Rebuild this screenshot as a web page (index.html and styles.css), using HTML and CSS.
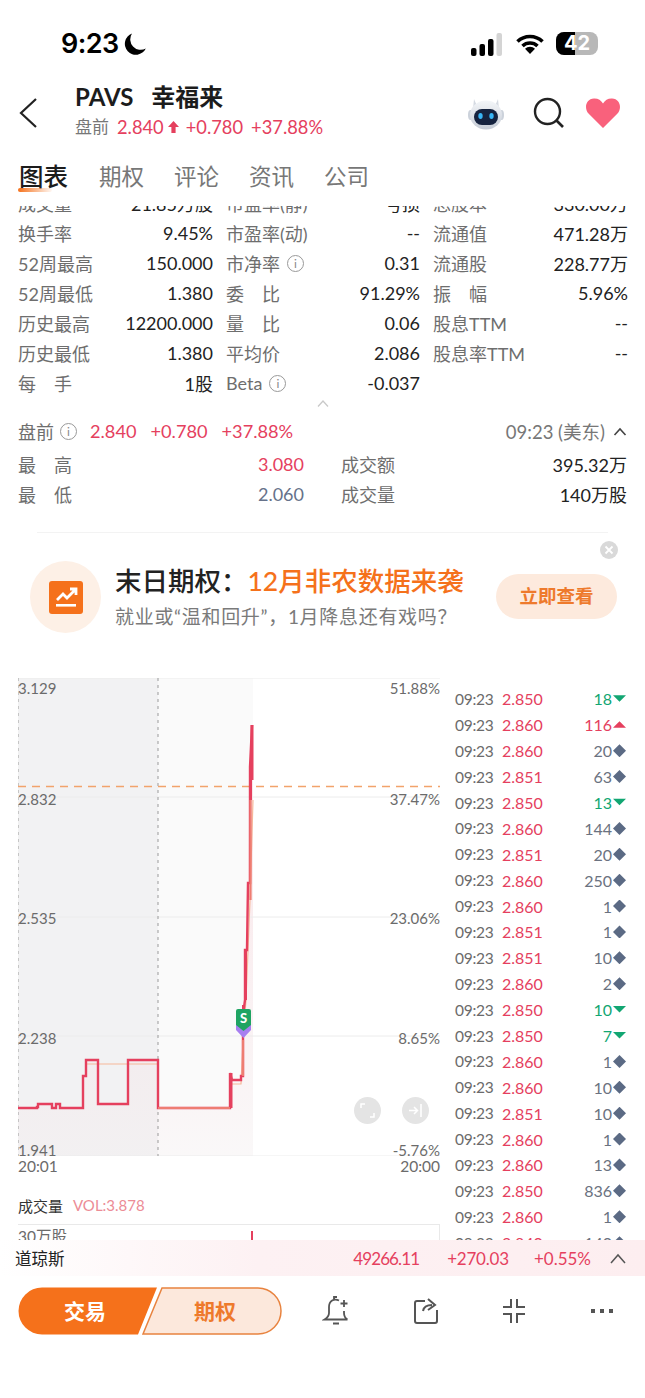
FILE: index.html
```html
<!DOCTYPE html>
<html lang="zh">
<head>
<meta charset="utf-8">
<title>PAVS 幸福来</title>
<link rel="stylesheet" href="styles.css">
</head>
<body>
<div class="page">
  <div class="status">
    <div class="status-left">
      <span class="clock">9:23</span>
      <svg class="moon" width="24" height="24" viewBox="0 0 24 24"><path d="M9 1.500A11 11 0 1 0 22.800 16.500 A10.500 10.500 0 0 1 9 1.500Z" fill="#000"/></svg>
    </div>
    <div class="status-right">
      <svg width="34" height="24" viewBox="0 0 34 24"><rect x="1" y="15" width="5.500" height="8" rx="2" fill="#000"/><rect x="9.500" y="11" width="5.500" height="12" rx="2" fill="#000"/><rect x="18" y="6" width="5.500" height="17" rx="2" fill="#000"/><rect x="26.500" y="0" width="5.500" height="23" rx="2" fill="#d4d4d4"/></svg>
      <svg width="28" height="22" viewBox="0 0 28 22"><path d="M1.500 8.500a18 18 0 0 1 25 0M6.500 13a11 11 0 0 1 15 0" fill="none" stroke="#000" stroke-width="3.600"/><path d="M14 21l-5-5.200a7 7 0 0 1 10 0Z" fill="#000"/></svg>
      <div class="battery"><div class="battery-fill"></div><span class="battery-num">42</span></div>
    </div>
  </div>

  <header class="head">
    <svg class="back" width="20" height="32" viewBox="0 0 20 32"><path d="M18 2 3 16l15 14" fill="none" stroke="#222" stroke-width="2.200"/></svg>
    <div class="head-main">
      <div class="head-title"><span>PAVS</span><span>幸福来</span></div>
      <div class="head-sub">
        <span class="sub-label">盘前</span>
        <span class="red">2.840</span>
        <svg class="up-arrow" width="13" height="14" viewBox="0 0 13 14"><path d="M6.500 1 12 7H8.600v6H4.400V7H1Z" fill="#e5405e"/></svg>
        <span class="red sub-gap">+0.780</span>
        <span class="red">+37.88%</span>
      </div>
    </div>
    <div class="head-icons">
      <svg width="38" height="36" viewBox="0 0 38 36">
        <defs><linearGradient id="robot" x1="0" y1="0" x2="0" y2="1"><stop offset="0" stop-color="#f4f6f9"/><stop offset="1" stop-color="#c6ccd6"/></linearGradient></defs>
        <path d="M7 4l3 7h18l3-7 1 10H6Z" fill="#d5dae2"/>
        <ellipse cx="3.500" cy="20" rx="2.500" ry="5" fill="#ccd2db"/><ellipse cx="34.500" cy="20" rx="2.500" ry="5" fill="#ccd2db"/>
        <ellipse cx="19" cy="20" rx="16" ry="14.500" fill="url(#robot)"/>
        <rect x="7" y="14" width="24" height="16" rx="8" fill="#16233f"/>
        <ellipse cx="13.500" cy="21" rx="2.200" ry="3" fill="#39b5f5"/><ellipse cx="24.500" cy="21" rx="2.200" ry="3" fill="#39b5f5"/>
      </svg>
      <svg class="search" width="32" height="32" viewBox="0 0 32 32"><circle cx="14.500" cy="14.500" r="12.500" fill="none" stroke="#222" stroke-width="2.400"/><path d="M23.500 23.500 30 30" stroke="#222" stroke-width="2.600"/></svg>
      <svg class="heart" width="36" height="32" viewBox="0 0 36 32"><path d="M18 31 3.500 16.500C-1 11.500.5 2 9 1.500c4-.2 7 1.800 9 5 2-3.200 5-5.200 9-5 8.500.5 10 10 5.500 15Z" fill="#f9617c"/></svg>
    </div>
  </header>

  <nav class="tabs">
    <span class="tab tab-on">图表<i class="tab-bar"></i></span>
    <span class="tab">期权</span>
    <span class="tab">评论</span>
    <span class="tab">资讯</span>
    <span class="tab">公司</span>
  </nav>

  <main class="scroll">
    <section class="stats">
      <div class="cell"><span>成交量</span><b>21.85万股</b></div>
      <div class="cell"><span>市盈率(静)</span><b>亏损</b></div>
      <div class="cell"><span>总股本</span><b>330.00万</b></div>

      <div class="cell"><span>换手率</span><b>9.45%</b></div>
      <div class="cell"><span>市盈率(动)</span><b>--</b></div>
      <div class="cell"><span>流通值</span><b>471.28万</b></div>

      <div class="cell"><span>52周最高</span><b>150.000</b></div>
      <div class="cell"><span>市净率<i class="info">i</i></span><b>0.31</b></div>
      <div class="cell"><span>流通股</span><b>228.77万</b></div>

      <div class="cell"><span>52周最低</span><b>1.380</b></div>
      <div class="cell"><span class="spaced">委比</span><b>91.29%</b></div>
      <div class="cell"><span class="spaced">振幅</span><b>5.96%</b></div>

      <div class="cell"><span>历史最高</span><b>12200.000</b></div>
      <div class="cell"><span class="spaced">量比</span><b>0.06</b></div>
      <div class="cell"><span>股息TTM</span><b>--</b></div>

      <div class="cell"><span>历史最低</span><b>1.380</b></div>
      <div class="cell"><span>平均价</span><b>2.086</b></div>
      <div class="cell"><span>股息率TTM</span><b>--</b></div>

      <div class="cell"><span class="spaced">每手</span><b>1股</b></div>
      <div class="cell"><span>Beta<i class="info">i</i></span><b>-0.037</b></div>
      <div class="cell"></div>
    </section>
    <div class="fold"><svg width="14" height="9" viewBox="0 0 14 9"><path d="M2 7.500 7 2l5 5.500" fill="none" stroke="#c9c9c9" stroke-width="1.300"/></svg></div>

    <section class="pre">
      <div class="pre-head">
        <span class="pre-label">盘前<i class="info">i</i></span>
        <span class="red pre-val">2.840</span>
        <span class="red pre-val">+0.780</span>
        <span class="red pre-val">+37.88%</span>
        <span class="pre-time">09:23 (美东)</span>
        <svg width="14" height="9" viewBox="0 0 14 9"><path d="M1.500 8 7 2l5.500 6" fill="none" stroke="#444" stroke-width="1.600"/></svg>
      </div>
      <div class="pre-grid">
        <div class="cell"><span class="spaced">最高</span><b class="red">3.080</b></div>
        <div class="cell"><span>成交额</span><b>395.32万</b></div>
        <div class="cell"><span class="spaced">最低</span><b class="slate">2.060</b></div>
        <div class="cell"><span>成交量</span><b>140万股</b></div>
      </div>
    </section>

    <div class="divider"></div>

    <section class="banner">
      <div class="banner-icon">
        <svg width="34" height="33" viewBox="0 0 34 33"><rect width="34" height="33" rx="3" fill="#f5711b"/><path d="M8 19l6-6 4 4 8-8M21 8h6v6" fill="none" stroke="#fff" stroke-width="2.800"/><rect x="7" y="23" width="20" height="2.600" fill="#fff"/></svg>
      </div>
      <div class="banner-text">
        <div class="banner-title">末日期权：<em>12月非农数据来袭</em></div>
        <div class="banner-sub">就业或“温和回升”，1月降息还有戏吗？</div>
      </div>
      <span class="banner-btn">立即查看</span>
      <svg class="banner-close" width="18" height="18" viewBox="0 0 18 18"><circle cx="9" cy="9" r="9" fill="#d9d9d9"/><path d="M5.500 5.500l7 7M12.500 5.500l-7 7" stroke="#fff" stroke-width="1.800"/></svg>
    </section>

    <section class="market">
      <div class="chart-col">
        <div class="chart">
          <svg class="chart-svg" width="422" height="478" viewBox="18 678 422 478">
            <defs>
              <linearGradient id="area" x1="0" y1="0" x2="0" y2="1"><stop offset="0" stop-color="#f9d2d9" stop-opacity=".55"/><stop offset="1" stop-color="#f9d2d9" stop-opacity=".05"/></linearGradient>
            </defs>
            <rect x="18" y="678" width="140" height="478" fill="#f2f2f3"/>
            <rect x="158" y="678" width="95" height="478" fill="#fafafa"/>
            <path d="M18 1108H37V1104H52V1108H56V1104H60V1108H83V1076H86V1060H98V1104H128V1060H158V1108H230V1073L232 1080H241V1076H243L245 1000 247 950 248 883 250 767 252 725H253V1156H18Z" fill="url(#area)" />
            <path d="M18 678H440M18 797H440M18 917H440M18 1036H440M18 1156H440" stroke="#ececec" stroke-width="1" fill="none"/>
            <path d="M18 678V1156M158 678V1156" stroke="#9a9a9a" stroke-width="1" stroke-dasharray="3 4" fill="none"/>
            <path d="M18 786.500H440" stroke="#f2a36b" stroke-width="1.300" stroke-dasharray="8 6" fill="none"/>
            <path d="M86 1064H158V1108H230V1084H241L243 1040 246 1000 250 900 253 800" stroke="#f6b79a" stroke-width="1.200" fill="none"/>
            <path d="M18 1108H37V1107H38V1104H52V1108H56V1104H60V1108H83V1076H86V1060H98V1104H128V1060H158V1108H230V1073L232 1080H241V1076H243V1015L245 1000V950H247L248 883H250V767L252 725" stroke="#e5405e" stroke-width="2.400" fill="none"/>
            <path d="M252 725V780M250.500 767V800M245.500 1000V950M243.500 1035V1005M231 1073V1108" stroke="#e5405e" stroke-width="3" fill="none"/>
            <path d="M158 1108H230M243 1076V1040M250.500 900V800" stroke="#ee7d72" stroke-width="2.200" fill="none"/>
            <path d="M236 1014H251V1030L243.500 1038 236 1030Z" fill="#a77ef0"/>
            <path d="M236 1011Q236 1009 238 1009H249Q251 1009 251 1011V1025L243.500 1031 236 1025Z" fill="#1fa463"/>
          </svg>
          <span class="axis-l axis-1">3.129</span>
          <span class="axis-l axis-2">2.832</span>
          <span class="axis-l axis-3">2.535</span>
          <span class="axis-l axis-4">2.238</span>
          <span class="axis-l axis-5">1.941</span>
          <span class="axis-r axis-1">51.88%</span>
          <span class="axis-r axis-2">37.47%</span>
          <span class="axis-r axis-3">23.06%</span>
          <span class="axis-r axis-4">8.65%</span>
          <span class="axis-r axis-5">-5.76%</span>
          <span class="s-mark">S</span>
          <span class="round-btn round-1"><svg width="15" height="15" viewBox="0 0 15 15"><path d="M1 5V1h4M14 10v4h-4" fill="none" stroke="#fff" stroke-width="1.500"/></svg></span>
          <span class="round-btn round-2"><svg width="15" height="15" viewBox="0 0 15 15"><path d="M1 7.500h8M6 4l3.500 3.500L6 11M13 1v13" fill="none" stroke="#fff" stroke-width="1.500"/></svg></span>
        </div>
        <div class="time-axis"><span>20:01</span><span>20:00</span></div>
        <div class="vol-head"><span class="vol-title">成交量</span><span class="vol-val">VOL:3.878</span></div>
        <div class="vol-chart"><span>30万股</span><i class="vol-bar"></i></div>
      </div>

      <div class="tape">
        <div class="tick"><span class="t">09:23</span><span class="p">2.850</span><span class="q green">18</span><i class="tri-down"></i></div>
        <div class="tick"><span class="t">09:23</span><span class="p">2.860</span><span class="q red">116</span><i class="tri-up"></i></div>
        <div class="tick"><span class="t">09:23</span><span class="p">2.860</span><span class="q">20</span><i class="dia"></i></div>
        <div class="tick"><span class="t">09:23</span><span class="p">2.851</span><span class="q">63</span><i class="dia"></i></div>
        <div class="tick"><span class="t">09:23</span><span class="p">2.850</span><span class="q green">13</span><i class="tri-down"></i></div>
        <div class="tick"><span class="t">09:23</span><span class="p">2.860</span><span class="q">144</span><i class="dia"></i></div>
        <div class="tick"><span class="t">09:23</span><span class="p">2.851</span><span class="q">20</span><i class="dia"></i></div>
        <div class="tick"><span class="t">09:23</span><span class="p">2.860</span><span class="q">250</span><i class="dia"></i></div>
        <div class="tick"><span class="t">09:23</span><span class="p">2.860</span><span class="q">1</span><i class="dia"></i></div>
        <div class="tick"><span class="t">09:23</span><span class="p">2.851</span><span class="q">1</span><i class="dia"></i></div>
        <div class="tick"><span class="t">09:23</span><span class="p">2.851</span><span class="q">10</span><i class="dia"></i></div>
        <div class="tick"><span class="t">09:23</span><span class="p">2.860</span><span class="q">2</span><i class="dia"></i></div>
        <div class="tick"><span class="t">09:23</span><span class="p">2.850</span><span class="q green">10</span><i class="tri-down"></i></div>
        <div class="tick"><span class="t">09:23</span><span class="p">2.850</span><span class="q green">7</span><i class="tri-down"></i></div>
        <div class="tick"><span class="t">09:23</span><span class="p">2.860</span><span class="q">1</span><i class="dia"></i></div>
        <div class="tick"><span class="t">09:23</span><span class="p">2.860</span><span class="q">10</span><i class="dia"></i></div>
        <div class="tick"><span class="t">09:23</span><span class="p">2.851</span><span class="q">10</span><i class="dia"></i></div>
        <div class="tick"><span class="t">09:23</span><span class="p">2.860</span><span class="q">1</span><i class="dia"></i></div>
        <div class="tick"><span class="t">09:23</span><span class="p">2.860</span><span class="q">13</span><i class="dia"></i></div>
        <div class="tick"><span class="t">09:23</span><span class="p">2.850</span><span class="q">836</span><i class="dia"></i></div>
        <div class="tick"><span class="t">09:23</span><span class="p">2.860</span><span class="q">1</span><i class="dia"></i></div>
        <div class="tick"><span class="t">09:23</span><span class="p">2.840</span><span class="q">140</span><i class="dia"></i></div>
      </div>
    </section>
  </main>

  <div class="index-bar">
    <span class="index-name">道琼斯</span>
    <span class="red index-a">49266.11</span>
    <span class="red index-b">+270.03</span>
    <span class="red index-c">+0.55%</span>
    <svg class="index-chev" width="18" height="11" viewBox="0 0 18 11"><path d="M2 10 9 2l7 8" fill="none" stroke="#555" stroke-width="1.500"/></svg>
  </div>

  <footer class="toolbar">
    <div class="actions">
      <svg class="actions-bg" width="264" height="48" viewBox="0 0 264 48">
        <path d="M24 .5H139L120 47.500H24A23.500 23.500 0 0 1 24 .5Z" fill="#f5711b"/>
        <path d="M144 1H240A23 23 0 0 1 240 47H125Z" fill="#fce8dc" stroke="#e8833f" stroke-width="1.500"/>
      </svg>
      <span class="act act-trade">交易</span>
      <span class="act act-opt">期权</span>
    </div>
    <div class="tools">
      <svg width="28" height="30" viewBox="0 0 28 30"><path d="M17 4.500C12 2 7 5 7 11v6c0 3-2 5-4.500 6.500h23M22 15v2c0 3 1 5 3.500 6.500M11 27.500h6M12 3V1h3" fill="none" stroke="#555" stroke-width="1.800"/><path d="M22 4v7M18.500 7.500h7" stroke="#555" stroke-width="1.800"/></svg>
      <svg width="26" height="28" viewBox="0 0 26 28"><path d="M12 4H4Q2 4 2 6V24Q2 26 4 26H22Q24 26 24 24V13" fill="none" stroke="#555" stroke-width="2"/><path d="M10 14Q11 8 19 8M15 2l7 6-7 5" fill="none" stroke="#555" stroke-width="2"/></svg>
      <svg width="24" height="26" viewBox="0 0 24 26"><path d="M9 1V9H1M15 1V9H23M9 25V16H1M15 25V16H23" fill="none" stroke="#555" stroke-width="2"/></svg>
      <svg width="26" height="6" viewBox="0 0 26 6"><rect x="2" y="1" width="4" height="4" fill="#555"/><rect x="11" y="1" width="4" height="4" fill="#555"/><rect x="20" y="1" width="4" height="4" fill="#555"/></svg>
    </div>
  </footer>
</div>
</body>
</html>
```

FILE: styles.css
```css
* { box-sizing: border-box; }
html, body { margin: 0; padding: 0; background: #fff; }
body { font-family: Lato, "Noto Sans CJK SC", sans-serif; color: #222; }
i, em { font-style: normal; }
b { font-weight: 400; }

.page { width: 645px; height: 1398px; overflow: hidden; display: flex; flex-direction: column; }
.red { color: #e5405e; }
.slate { color: #66728a; }
.green { color: #12a672; }

/* status bar */
.status { height: 78px; flex: none; display: flex; justify-content: space-between; padding: 26px 47px 0 61px; }
.status-left { display: flex; align-items: flex-start; gap: 5px; }
.clock { font-family: Inter, sans-serif; font-size: 27px; line-height: 36px; font-weight: 600; color: #000; letter-spacing: -.6px; }
.moon { margin-top: 6px; }
.status-right { display: flex; align-items: flex-start; gap: 12px; padding-top: 7px; }
.battery { position: relative; width: 42px; height: 23px; border-radius: 8px; background: #b8b8b8; overflow: hidden; margin-top: -1px; }
.battery-fill { width: 19px; height: 23px; background: #000; }
.battery-num { position: absolute; inset: 0; text-align: center; font-family: Inter, sans-serif; font-weight: 700; font-size: 20px; line-height: 23px; color: #fff; }

/* header */
.head { height: 72px; flex: none; display: flex; align-items: center; padding: 0 24px 0 18px; position: relative; }
.back { flex: none; margin-top: -2px; }
.head-main { margin-left: 37px; flex: 1; }
.head-title { display: flex; gap: 18px; font-size: 24px; line-height: 34px; font-weight: 700; color: #1c1c1c; margin-top: -8px; }
.head-sub { display: flex; align-items: center; font-size: 18.300px; line-height: 26px; }
.sub-label { color: #777; font-size: 17px; margin-right: 8px; }
.up-arrow { margin: 0 6px 0 3px; }
.sub-gap { margin-right: 8px; }
.head-icons { display: flex; align-items: center; margin-top: -2px; }
.search { margin-left: 28px; }
.heart { margin-left: 20px; }

/* tabs */
.tabs { height: 56px; flex: none; display: flex; align-items: flex-start; padding: 9px 0 0 19px; gap: 30px; position: relative; z-index: 1; }
.tab { font-size: 22.500px; line-height: 36px; color: #777; position: relative; }
.tab-on { font-size: 24.500px; font-weight: 500; color: #1c1c1c; margin-right: 1px; }
.tab-bar { position: absolute; left: -1px; top: 29px; width: 34px; height: 4px; border-radius: 2px; background: linear-gradient(90deg, #f5711b, rgba(245, 113, 27, .05)); }

/* scrolling area */
.scroll { height: 1034px; flex: none; overflow: hidden; }
.stats { margin-top: -18px; padding: 0 18px; display: grid; grid-template-columns: 195px 194px 195px; column-gap: 13px; }
.cell { height: 30px; display: flex; justify-content: space-between; align-items: center; font-size: 18px; white-space: nowrap; }
.cell span { color: #6e6e6e; display: flex; align-items: center; }
.cell b { color: #222; }
.cell b.red { color: #e5405e; }
.cell b.slate { color: #66728a; }
.cell span.spaced { letter-spacing: 18px; }
.info { display: inline-block; width: 17px; height: 17px; margin-left: 7px; border: 1px solid #999; border-radius: 50%; font-size: 12px; line-height: 15px; text-align: center; color: #888; letter-spacing: 0; }
.fold { height: 18px; display: flex; justify-content: center; align-items: flex-start; padding-top: 1px; }

.pre { padding: 0 18px; }
.pre-head { height: 30px; display: flex; align-items: center; font-size: 18px; }
.pre-label { color: #6e6e6e; display: flex; align-items: center; margin-right: 13px; }
.pre-label .info { margin-left: 6px; }
.pre-val { margin-right: 14px; font-size: 18.200px; }
.pre-time { margin-left: auto; margin-right: 8px; color: #777; font-size: 18.500px; }
.pre-grid { margin-top: 3px; display: grid; grid-template-columns: 286px 286px; column-gap: 37px; }

.divider { margin: 23px 37px 0; height: 1px; background: #f3f3f3; }

.banner { position: relative; margin-top: 28px; height: 72px; display: flex; align-items: center; padding: 0 28px 0 30px; }
.banner-icon { width: 71px; height: 72px; flex: none; border-radius: 50%; background: #fdf0e6; display: flex; align-items: center; justify-content: center; }
.banner-text { margin-left: 14px; flex: 1; white-space: nowrap; }
.banner-title { font-size: 26.500px; line-height: 36px; font-weight: 500; color: #222; }
.banner-title em { color: #f5711b; }
.banner-sub { font-size: 19px; letter-spacing: .7px; line-height: 30px; color: #7a7a7a; margin-top: 3px; }
.banner-btn { flex: none; width: 121px; height: 45px; border-radius: 23px; background: #fdeadd; color: #ee7a2c; font-size: 18.500px; font-weight: 700; line-height: 45px; text-align: center; margin-top: -2px; }
.banner-close { position: absolute; right: 27px; top: -20px; }

/* chart */
.market { margin-top: 45px; display: flex; align-items: flex-start; }
.chart-col { width: 422px; margin-left: 18px; flex: none; }
.chart { position: relative; width: 422px; height: 478px; }
.chart-svg { display: block; }
.axis-l, .axis-r { position: absolute; font-size: 15px; line-height: 20px; color: #6b6b6b; }
.axis-l { left: 0; }
.axis-r { right: 0; }
.axis-1 { top: 0; }
.axis-2 { top: 111px; }
.axis-3 { top: 230px; }
.axis-4 { top: 350px; }
.axis-5 { top: 462px; }
.s-mark { position: absolute; left: 218px; top: 331px; width: 15px; text-align: center; font-size: 13px; line-height: 18px; font-weight: 900; color: #fff; }
.round-btn { position: absolute; top: 419px; width: 27px; height: 27px; border-radius: 50%; background: #e4e4e4; display: flex; align-items: center; justify-content: center; }
.round-1 { left: 336px; }
.round-2 { left: 384px; }
.time-axis { height: 20px; display: flex; justify-content: space-between; font-size: 15.500px; line-height: 20px; color: #6b6b6b; }
.vol-head { margin-top: 19px; height: 20px; display: flex; align-items: center; gap: 10px; }
.vol-title { font-size: 15px; color: #333; }
.vol-val { font-size: 15px; color: #ec8c96; }
.vol-chart { position: relative; margin-top: 9px; height: 30px; border-top: 1px solid #e9e9e9; border-right: 1px solid #e9e9e9; font-size: 15.500px; line-height: 22px; color: #6b6b6b; }
.vol-chart span { display: block; }
.vol-bar { position: absolute; left: 233px; top: 6px; width: 1.500px; height: 10px; background: #e5405e; }

/* tape */
.tape { margin-left: 15px; margin-top: 8px; width: 171px; flex: none; }
.tick { height: 25.900px; display: flex; align-items: center; font-size: 16px; white-space: nowrap; }
.t { width: 47px; color: #6b6b6b; font-size: 15.500px; letter-spacing: -.3px; }
.p { color: #e5405e; }
.q { margin-left: auto; color: #6b7280; }
.q.green { color: #12a672; }
.q.red { color: #e5405e; }
.tri-down, .tri-up, .dia { flex: none; width: 13px; height: 13px; margin-left: 1px; display: block; }
.tri-down { background: #12a672; clip-path: polygon(0 22%, 100% 22%, 50% 72%); }
.tri-up { background: #e5405e; clip-path: polygon(50% 22%, 100% 72%, 0 72%); }
.dia { background: #5b6a84; clip-path: polygon(50% 0, 100% 50%, 50% 100%, 0 50%); }

/* index ticker */
.index-bar { height: 36px; flex: none; display: flex; align-items: center; padding: 0 18px 0 15px; background: linear-gradient(90deg, #fff 0%, #fdf1f3 40%, #fdeef0 100%); font-size: 17px; }
.index-name { font-size: 16.500px; color: #222; margin-right: auto; }
.index-a { letter-spacing: -.9px; }
.index-b { margin-left: 28px; letter-spacing: -.2px; }
.index-c { margin-left: 25px; }
.index-chev { margin-left: 18px; }

/* bottom bar */
.toolbar { flex: 1; display: flex; align-items: flex-start; padding: 11px 0 0 18px; }
.actions { position: relative; width: 264px; height: 48px; flex: none; display: flex; }
.actions-bg { position: absolute; left: 0; top: 0; }
.act { position: relative; font-size: 21px; line-height: 48px; font-weight: 700; text-align: center; }
.act-trade { width: 134px; color: #fff; }
.act-opt { width: 126px; color: #ee7a2c; }
.tools { flex: none; width: 293px; margin-left: 40px; display: flex; align-items: center; justify-content: space-between; height: 48px; }
```
